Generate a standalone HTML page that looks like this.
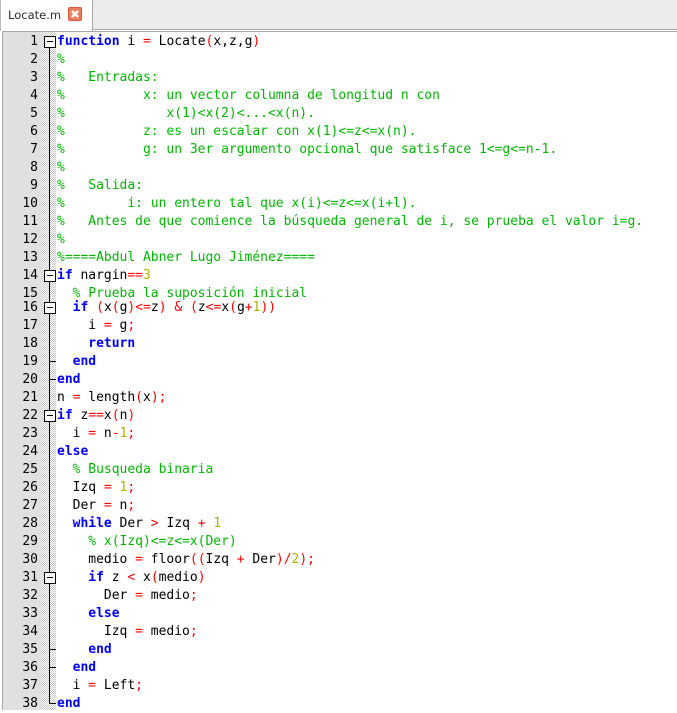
<!DOCTYPE html>
<html><head><meta charset="utf-8"><style>
html,body{margin:0;padding:0;width:677px;height:710px;overflow:hidden;background:#fff}
#tabbar{position:absolute;left:0;top:0;width:677px;height:29px;background:#ececec;border-bottom:1px solid #a8a8a8}
#line2{position:absolute;left:2px;top:31px;width:675px;height:1px;background:#a8a8a8}
#tab{position:absolute;left:0;top:0;width:91px;height:31px;background:#fff;border-left:1px solid #bbb;border-right:1px solid #a8a8a8}
#tabt{position:absolute;left:7px;top:6px;font:11.5px/18px "DejaVu Sans",sans-serif;color:#2e2e2e}
#x{position:absolute;left:67px;top:7px;width:12px;height:12px;background:#e8805f;border:1px solid #d9593c;border-radius:2px}
#lb{position:absolute;left:2px;top:31px;width:1px;height:679px;background:#a8a8a8}
#num{position:absolute;left:3px;top:32px;width:39px;height:678px;background:#e0e0e0}
#fold{position:absolute;left:42px;top:32px;width:14px;height:678px;display:block}
.n{position:absolute;left:3px;width:35px;text-align:right;font:13px/18px "DejaVu Sans Mono",monospace;color:#000;height:18px}
.l{position:absolute;left:57px;white-space:pre;font:13px/18px "DejaVu Sans Mono",monospace;letter-spacing:-0.012px;color:#000;height:18px}
b{color:#00f;font-weight:bold}
i{font-style:normal;color:#f00}
u{text-decoration:none;color:#b0b000}
em{font-style:normal;color:#00b800}
.v{position:absolute;left:49px;width:1px;background:#000}
.h{position:absolute;left:49px;width:7px;height:1px;background:#000}
.box{position:absolute;left:44px;width:10px;height:10px;background:#fff;border:1px solid #000}
.box:after{content:"";position:absolute;left:2px;top:4px;width:6px;height:1px;background:#000}
</style></head><body>
<div id="tabbar"></div><div id="line2"></div>
<div id="tab"><div id="tabt">Locate.m</div>
<div id="x"><svg width="12" height="12" style="display:block"><path d="M3 3L9 9M9 3L3 9" stroke="#fff" stroke-width="2.4"/></svg></div></div>
<div id="lb"></div><div id="num"></div>
<svg id="fold" width="14" height="678" shape-rendering="crispEdges"><defs><pattern id="ck" width="2" height="2" patternUnits="userSpaceOnUse"><rect width="2" height="2" fill="#fff"/><rect width="1" height="1" fill="#c8c8c8"/><rect x="1" y="1" width="1" height="1" fill="#c8c8c8"/></pattern></defs><rect width="14" height="678" fill="url(#ck)"/></svg>

<div class="v" style="top:41px;height:663px"></div>
<div class="h" style="top:361px"></div>
<div class="h" style="top:379px"></div>
<div class="h" style="top:649px"></div>
<div class="h" style="top:667px"></div>
<div class="h" style="top:703px"></div>
<div class="box" style="top:36px"></div>
<div class="box" style="top:270px"></div>
<div class="box" style="top:302px"></div>
<div class="box" style="top:410px"></div>
<div class="box" style="top:572px"></div>

<div class="n" style="top:33px">1</div><div class="l" style="top:33px"><b>function</b> i <i>=</i> Locate<i>(</i>x,z,g<i>)</i></div>
<div class="n" style="top:51px">2</div><div class="l" style="top:51px"><em>%</em></div>
<div class="n" style="top:69px">3</div><div class="l" style="top:69px"><em>%   Entradas:</em></div>
<div class="n" style="top:87px">4</div><div class="l" style="top:87px"><em>%          x: un vector columna de longitud n con</em></div>
<div class="n" style="top:105px">5</div><div class="l" style="top:105px"><em>%             x(1)&lt;x(2)&lt;...&lt;x(n).</em></div>
<div class="n" style="top:123px">6</div><div class="l" style="top:123px"><em>%          z: es un escalar con x(1)&lt;=z&lt;=x(n).</em></div>
<div class="n" style="top:141px">7</div><div class="l" style="top:141px"><em>%          g: un 3er argumento opcional que satisface 1&lt;=g&lt;=n-1.</em></div>
<div class="n" style="top:159px">8</div><div class="l" style="top:159px"><em>%</em></div>
<div class="n" style="top:177px">9</div><div class="l" style="top:177px"><em>%   Salida:</em></div>
<div class="n" style="top:195px">10</div><div class="l" style="top:195px"><em>%        i: un entero tal que x(i)&lt;=z&lt;=x(i+l).</em></div>
<div class="n" style="top:213px">11</div><div class="l" style="top:213px"><em>%   Antes de que comience la búsqueda general de i, se prueba el valor i=g.</em></div>
<div class="n" style="top:231px">12</div><div class="l" style="top:231px"><em>%</em></div>
<div class="n" style="top:249px">13</div><div class="l" style="top:249px"><em>%====Abdul Abner Lugo Jiménez====</em></div>
<div class="n" style="top:267px">14</div><div class="l" style="top:267px"><b>if</b> nargin<i>==</i><u>3</u></div>
<div class="n" style="top:285px">15</div><div class="l" style="top:285px">  <em>% Prueba la suposición inicial</em></div>
<div class="n" style="top:299px">16</div><div class="l" style="top:299px">  <b>if</b> <i>(</i>x<i>(</i>g<i>)&lt;=</i>z<i>)</i> <i>&amp;</i> <i>(</i>z<i>&lt;=</i>x<i>(</i>g<i>+</i><u>1</u><i>))</i></div>
<div class="n" style="top:317px">17</div><div class="l" style="top:317px">    i <i>=</i> g<i>;</i></div>
<div class="n" style="top:335px">18</div><div class="l" style="top:335px">    <b>return</b></div>
<div class="n" style="top:353px">19</div><div class="l" style="top:353px">  <b>end</b></div>
<div class="n" style="top:371px">20</div><div class="l" style="top:371px"><b>end</b></div>
<div class="n" style="top:389px">21</div><div class="l" style="top:389px">n <i>=</i> length<i>(</i>x<i>);</i></div>
<div class="n" style="top:407px">22</div><div class="l" style="top:407px"><b>if</b> z<i>==</i>x<i>(</i>n<i>)</i></div>
<div class="n" style="top:425px">23</div><div class="l" style="top:425px">  i <i>=</i> n<i>-</i><u>1</u><i>;</i></div>
<div class="n" style="top:443px">24</div><div class="l" style="top:443px"><b>else</b></div>
<div class="n" style="top:461px">25</div><div class="l" style="top:461px">  <em>% Busqueda binaria</em></div>
<div class="n" style="top:479px">26</div><div class="l" style="top:479px">  Izq <i>=</i> <u>1</u><i>;</i></div>
<div class="n" style="top:497px">27</div><div class="l" style="top:497px">  Der <i>=</i> n<i>;</i></div>
<div class="n" style="top:515px">28</div><div class="l" style="top:515px">  <b>while</b> Der <i>&gt;</i> Izq <i>+</i> <u>1</u></div>
<div class="n" style="top:533px">29</div><div class="l" style="top:533px">    <em>% x(Izq)&lt;=z&lt;=x(Der)</em></div>
<div class="n" style="top:551px">30</div><div class="l" style="top:551px">    medio <i>=</i> floor<i>((</i>Izq <i>+</i> Der<i>)/</i><u>2</u><i>);</i></div>
<div class="n" style="top:569px">31</div><div class="l" style="top:569px">    <b>if</b> z <i>&lt;</i> x<i>(</i>medio<i>)</i></div>
<div class="n" style="top:587px">32</div><div class="l" style="top:587px">      Der <i>=</i> medio<i>;</i></div>
<div class="n" style="top:605px">33</div><div class="l" style="top:605px">    <b>else</b></div>
<div class="n" style="top:623px">34</div><div class="l" style="top:623px">      Izq <i>=</i> medio<i>;</i></div>
<div class="n" style="top:641px">35</div><div class="l" style="top:641px">    <b>end</b></div>
<div class="n" style="top:659px">36</div><div class="l" style="top:659px">  <b>end</b></div>
<div class="n" style="top:677px">37</div><div class="l" style="top:677px">  i <i>=</i> Left<i>;</i></div>
<div class="n" style="top:695px">38</div><div class="l" style="top:695px"><b>end</b></div>
</body></html>
